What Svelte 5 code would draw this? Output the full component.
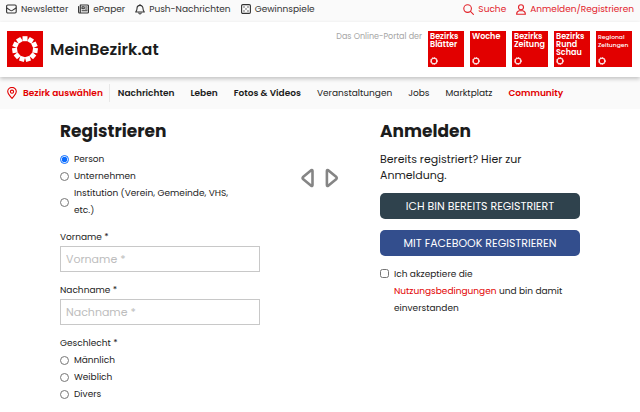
<script>
    const navItems = [
        { label: 'Nachrichten', kind: 'strong' },
        { label: 'Leben', kind: 'strong' },
        { label: 'Fotos & Videos', kind: 'strong' },
        { label: 'Veranstaltungen', kind: '' },
        { label: 'Jobs', kind: '' },
        { label: 'Marktplatz', kind: '' },
        { label: 'Community', kind: 'red' }
    ];

    const brands = [
        { lines: ['Bezirks', 'Blätter'] },
        { lines: ['Woche'] },
        { lines: ['Bezirks', 'Zeitung'] },
        { lines: ['Bezirks', 'Rund', 'Schau'] },
        { lines: ['Regional', 'Zeitungen'], small: true }
    ];

    const accountTypes = ['Person', 'Unternehmen', 'Institution (Verein, Gemeinde, VHS, etc.)'];
    const genders = ['Männlich', 'Weiblich', 'Divers'];

    // The logo is a ring of eleven blocks
    const blocks = Array.from({ length: 11 }, (_, i) => (i * 360) / 11);

    let accountType = 'Person';
    let gender = '';
    let firstName = '';
    let lastName = '';
    let accepted = false;
</script>

<div class="topbar">
    <nav class="links" aria-label="Service">
        <a href="#newsletter">
            <svg width="11" height="10" viewBox="0 0 11 10" aria-hidden="true">
                <rect x="0.6" y="1" width="9.6" height="8" rx="1.2" />
                <path d="M0.8 4 4.4 6.4Q5.4 7 6.4 6.4L10 4" />
            </svg>
            Newsletter
        </a>
        <a href="#epaper">
            <svg width="11" height="10" viewBox="0 0 11 10" aria-hidden="true">
                <path d="M2.3 1h7.2a1 1 0 0 1 1 1v6a1 1 0 0 1-1 1H1.6a1 1 0 0 1-1-1V2.5M2.3 1v7" />
                <path d="M4 2.8h2.2v2H4zM7.6 3h1.6M7.6 5h1.6M4 6.8h5.2" />
            </svg>
            ePaper
        </a>
        <a href="#push">
            <svg width="10" height="11" viewBox="0 0 10 11" aria-hidden="true">
                <path d="M5 0.4v1M5 1.4C3 1.4 2 2.9 2 4.6 2 6.6 1.3 7.2 0.7 8h8.6C8.7 7.2 8 6.6 8 4.6 8 2.9 7 1.4 5 1.4zM3.9 9.2Q5 10.8 6.1 9.2" />
            </svg>
            Push-Nachrichten
        </a>
        <a href="#gewinnspiele">
            <svg width="10" height="10" viewBox="0 0 10 10" aria-hidden="true">
                <rect x="0.6" y="0.6" width="8.8" height="8.8" rx="1.2" />
                <path class="dots" d="M3 3h0M7 3h0M5 5h0M3 7h0M7 7h0" />
            </svg>
            Gewinnspiele
        </a>
    </nav>
    <nav class="links account" aria-label="Konto">
        <a href="#suche">
            <svg width="11" height="11" viewBox="0 0 11 11" aria-hidden="true">
                <circle cx="4.6" cy="4.6" r="3.8" />
                <path d="M7.4 7.4 10.4 10.4" />
            </svg>
            Suche
        </a>
        <a href="#anmelden">
            <svg width="10" height="11" viewBox="0 0 10 11" aria-hidden="true">
                <circle cx="5" cy="3.2" r="2.5" />
                <path d="M3.2 6.8h3.6Q9.2 7.2 9.4 10.2H0.6Q0.8 7.2 3.2 6.8z" />
            </svg>
            Anmelden/Registrieren
        </a>
    </nav>
</div>

<header>
    <a class="logo" href="#start">
        <svg width="36" height="36" viewBox="0 0 36 36" aria-hidden="true">
            <rect width="36" height="36" fill="#e20000" />
            {#each blocks as angle}
                <rect x="15.5" y="5.2" width="5" height="5" fill="#fff" transform="rotate({angle} 18 18)" />
            {/each}
        </svg>
        <span>MeinBezirk.at</span>
    </a>
    <div class="portal">
        <span class="claim">Das Online-Portal der</span>
        {#each brands as brand}
            <a class="brand" class:small={brand.small} href="#portal">
                <span>
                    {#each brand.lines as line}
                        <span class="line">{line}</span>
                    {/each}
                </span>
                <svg width="8" height="8" viewBox="0 0 8 8" aria-hidden="true">
                    <circle cx="4" cy="4" r="2.8" fill="none" stroke="#fff" stroke-width="1" />
                    <circle cx="4" cy="4" r="3.4" fill="none" stroke="#fff" stroke-width="1" stroke-dasharray="1.2 0.74" />
                </svg>
            </a>
        {/each}
    </div>
</header>

<nav class="mainnav" aria-label="Hauptmenü">
    <a class="region" href="#bezirk">
        <svg width="10" height="12" viewBox="0 0 10 12" aria-hidden="true">
            <path d="M5 11.4C3 8.8 0.7 6.8 0.7 4.7a4.3 4.3 0 0 1 8.6 0C9.3 6.8 7 8.8 5 11.4z" />
            <circle cx="5" cy="4.7" r="1.6" />
        </svg>
        Bezirk auswählen
    </a>
    {#each navItems as item}
        <a class={item.kind} href="#menu">{item.label}</a>
    {/each}
</nav>

<main>
    <form class="register">
        <h2>Registrieren</h2>
        <div class="options" role="radiogroup" aria-label="Kontotyp">
            {#each accountTypes as type}
                <label class="option">
                    <input type="radio" name="type" value={type} bind:group={accountType} />
                    <span>{type}</span>
                </label>
            {/each}
        </div>
        <div class="field">
            <label for="firstname">Vorname *</label>
            <input id="firstname" type="text" placeholder="Vorname *" bind:value={firstName} />
        </div>
        <div class="field">
            <label for="lastname">Nachname *</label>
            <input id="lastname" type="text" placeholder="Nachname *" bind:value={lastName} />
        </div>
        <fieldset>
            <legend>Geschlecht *</legend>
            {#each genders as name}
                <label class="option">
                    <input type="radio" name="gender" value={name} bind:group={gender} />
                    <span>{name}</span>
                </label>
            {/each}
        </fieldset>
    </form>

    <div class="arrows">
        <svg width="38" height="20" viewBox="0 0 38 20" aria-hidden="true">
            <path d="M10.2 2.2 2 9Q1.2 10 2 11l8.2 6.8Q11.5 18.4 11.5 17V3Q11.5 1.6 10.2 2.2z" />
            <path d="M27.2 2.2 35.4 9Q36.2 10 35.4 11l-8.2 6.8Q25.9 18.4 25.9 17V3Q25.9 1.6 27.2 2.2z" />
        </svg>
    </div>

    <section class="login">
        <h2>Anmelden</h2>
        <p>Bereits registriert? Hier zur Anmeldung.</p>
        <button type="button">ICH BIN BEREITS REGISTRIERT</button>
        <button type="button" class="facebook">MIT FACEBOOK REGISTRIEREN</button>
        <div class="terms">
            <input id="terms" type="checkbox" bind:checked={accepted} />
            <label for="terms">
                Ich akzeptiere die <a href="#terms-text">Nutzungsbedingungen</a> und bin damit einverstanden
            </label>
        </div>
    </section>
</main>

<style>
    :global(body) {
        margin: 0;
        background: #fff;
        color: #1c1c1c;
        font-family: Poppins, Inter, 'Liberation Sans', sans-serif;
        font-size: 9px;
        line-height: 17px;
    }
    a {
        color: inherit;
        text-decoration: none;
    }
    svg {
        flex: none;
    }

    .topbar {
        display: flex;
        justify-content: space-between;
        padding: 0 6px 4px;
        background: #fafafa;
        line-height: 18px;
        color: #333;
    }
    .links {
        display: flex;
        gap: 10px;
    }
    .links a {
        display: flex;
        align-items: center;
        gap: 4px;
        white-space: nowrap;
    }
    .links svg,
    .region svg {
        fill: none;
        stroke: currentColor;
        stroke-width: 1.1;
        stroke-linejoin: round;
        stroke-linecap: round;
    }
    .links .dots {
        stroke-width: 1.3;
    }
    .account {
        color: #e2232a;
    }

    header {
        position: relative;
        display: flex;
        justify-content: space-between;
        align-items: flex-start;
        padding: 9px 7px 10px;
        background: #fff;
        box-shadow: 0 2px 4px rgba(0, 0, 0, 0.22);
    }
    .logo {
        display: flex;
        align-items: center;
        gap: 7px;
        font-size: 16px;
        font-weight: 600;
    }
    .portal {
        display: flex;
        gap: 6px;
        padding-right: 1px;
    }
    .claim {
        line-height: 12px;
        font-size: 8px;
        color: #a5a5a5;
        white-space: nowrap;
    }
    .brand {
        display: flex;
        flex-direction: column;
        justify-content: space-between;
        box-sizing: border-box;
        width: 36px;
        height: 36px;
        padding: 2px;
        background: #e20000;
        color: #fff;
        font-size: 8px;
        font-weight: 600;
        line-height: 8px;
    }
    .line {
        display: block;
    }
    .brand.small {
        font-size: 6px;
        font-weight: 500;
    }

    .mainnav {
        display: flex;
        align-items: center;
        gap: 16px;
        padding: 7px 7px;
        background: #fafafa;
        line-height: 18px;
        white-space: nowrap;
    }
    .region {
        display: flex;
        align-items: center;
        gap: 6px;
        padding-right: 6px;
        margin-right: -8px;
        border-right: 1px solid #e8e8e8;
    }
    .region,
    .red {
        color: #e20000;
        font-weight: 600;
    }
    .strong {
        font-weight: 600;
    }

    main {
        display: grid;
        grid-template-columns: 5fr 3fr 5fr;
        padding: 12px 60px;
    }
    h2 {
        margin: 0 0 10px;
        font-size: 17px;
        font-weight: 700;
        line-height: 20px;
    }
    .option {
        display: flex;
        align-items: center;
        gap: 5px;
    }
    .options {
        padding-right: 16px;
    }
    input[type='radio'],
    input[type='checkbox'] {
        flex: none;
        width: 9px;
        height: 9px;
        margin: 0;
        accent-color: #0a6cff;
    }
    .field {
        margin-top: 10px;
    }
    .field label {
        display: block;
    }
    .field input {
        display: block;
        box-sizing: border-box;
        width: 100%;
        height: 26px;
        padding: 0 5px;
        border: 1px solid #c8c8c8;
        border-radius: 0;
        background: #fff;
        color: inherit;
        font-family: inherit;
        font-size: 11px;
    }
    .field input::placeholder {
        color: #bdbdbd;
    }
    fieldset {
        margin: 10px 0 0;
        padding: 0;
        border: none;
    }
    legend {
        padding: 0;
    }

    .arrows {
        padding-top: 47px;
        text-align: center;
    }
    .arrows path {
        fill: none;
        stroke: #858585;
        stroke-width: 2.6;
        stroke-linejoin: round;
    }

    p {
        margin: 0 0 10px;
        font-size: 11px;
        line-height: 16px;
        max-width: 160px;
    }
    button {
        display: block;
        width: 100%;
        height: 26px;
        margin-bottom: 11px;
        padding: 0;
        border: none;
        border-radius: 5px;
        background: #2f424d;
        color: #fff;
        font-family: inherit;
        font-size: 11px;
        cursor: pointer;
    }
    .facebook {
        margin-bottom: 10px;
        background: #334e8d;
    }
    .terms {
        display: flex;
        align-items: flex-start;
        gap: 5px;
        padding-right: 6px;
    }
    .terms input {
        margin-top: 3px;
    }
    .terms a {
        color: #e20000;
    }
</style>
